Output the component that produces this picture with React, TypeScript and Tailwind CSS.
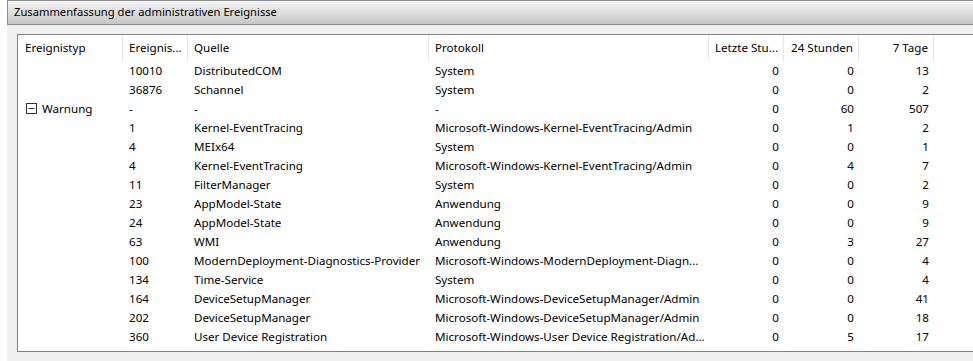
import React from "react";

interface Row {
  typ?: string;
  id: string;
  quelle: string;
  protokoll: string;
  h1: string;
  h24: string;
  d7: string;
}

const rows: Row[] = [
  { id: "10010", quelle: "DistributedCOM", protokoll: "System", h1: "0", h24: "0", d7: "13" },
  { id: "36876", quelle: "Schannel", protokoll: "System", h1: "0", h24: "0", d7: "2" },
  { typ: "Warnung", id: "-", quelle: "-", protokoll: "-", h1: "0", h24: "60", d7: "507" },
  { id: "1", quelle: "Kernel-EventTracing", protokoll: "Microsoft-Windows-Kernel-EventTracing/Admin", h1: "0", h24: "1", d7: "2" },
  { id: "4", quelle: "MEIx64", protokoll: "System", h1: "0", h24: "0", d7: "1" },
  { id: "4", quelle: "Kernel-EventTracing", protokoll: "Microsoft-Windows-Kernel-EventTracing/Admin", h1: "0", h24: "4", d7: "7" },
  { id: "11", quelle: "FilterManager", protokoll: "System", h1: "0", h24: "0", d7: "2" },
  { id: "23", quelle: "AppModel-State", protokoll: "Anwendung", h1: "0", h24: "0", d7: "9" },
  { id: "24", quelle: "AppModel-State", protokoll: "Anwendung", h1: "0", h24: "0", d7: "9" },
  { id: "63", quelle: "WMI", protokoll: "Anwendung", h1: "0", h24: "3", d7: "27" },
  { id: "100", quelle: "ModernDeployment-Diagnostics-Provider", protokoll: "Microsoft-Windows-ModernDeployment-Diagn...", h1: "0", h24: "0", d7: "4" },
  { id: "134", quelle: "Time-Service", protokoll: "System", h1: "0", h24: "0", d7: "4" },
  { id: "164", quelle: "DeviceSetupManager", protokoll: "Microsoft-Windows-DeviceSetupManager/Admin", h1: "0", h24: "0", d7: "41" },
  { id: "202", quelle: "DeviceSetupManager", protokoll: "Microsoft-Windows-DeviceSetupManager/Admin", h1: "0", h24: "0", d7: "18" },
  { id: "360", quelle: "User Device Registration", protokoll: "Microsoft-Windows-User Device Registration/Ad...", h1: "0", h24: "5", d7: "17" },
];

const cols = "grid grid-cols-[105px_65px_241px_280px_75px_75px_75px_1fr]";

const App = () => {
  return (
    <div className="w-[973px] h-[361px] overflow-hidden bg-white flex font-['Noto_Sans',sans-serif] text-[11.6px] text-black">
      <div className="ml-[7px] flex-1 flex flex-col bg-[#f0f0f0]">
        {/* title bar */}
        <div className="h-[25px] shrink-0 flex items-center pl-[6px] border-t border-l border-b border-[#8c8c8c] bg-gradient-to-b from-[#f4f4f4] to-[#c6c6c6]">
          <span className="text-[11.2px]">Zusammenfassung der administrativen Ereignisse</span>
        </div>
        {/* table */}
        <div className="pl-[10px] pt-[9px] pb-[9px] flex-1 flex">
          <div className="flex-1 bg-white border-t border-l border-b border-[#828282] overflow-hidden">
            <div className={`${cols} h-[26px] items-stretch whitespace-nowrap`}>
              <div className="flex items-center pl-[7px] border-r border-[#e5e5e5]">Ereignistyp</div>
              <div className="flex items-center pl-[6px] border-r border-[#e5e5e5]">Ereignis...</div>
              <div className="flex items-center pl-[6px] border-r border-[#e5e5e5]">Quelle</div>
              <div className="flex items-center pl-[6px] border-r border-[#e5e5e5]">Protokoll</div>
              <div className="flex items-center justify-end pr-[5px] border-r border-[#e5e5e5]">Letzte Stu...</div>
              <div className="flex items-center justify-end pr-[5px] border-r border-[#e5e5e5]">24 Stunden</div>
              <div className="flex items-center justify-end pr-[5px] border-r border-[#e5e5e5]">7 Tage</div>
              <div />
            </div>
            {rows.map((row, index) => (
              <div key={index} className={`${cols} h-[19px] items-center whitespace-nowrap`}>
                <div className="pl-[8px] flex items-center gap-[5px]">
                  {row.typ && (
                    <>
                      <svg width="11" height="11" viewBox="0 0 11 11">
                        <rect x="0.5" y="0.5" width="10" height="10" fill="white" stroke="#333" />
                        <line x1="2.5" y1="5.5" x2="8.5" y2="5.5" stroke="#333" />
                      </svg>
                      <span>{row.typ}</span>
                    </>
                  )}
                </div>
                <div className="pl-[6px]">{row.id}</div>
                <div className="pl-[6px] overflow-hidden">{row.quelle}</div>
                <div className="pl-[6px] overflow-hidden">{row.protokoll}</div>
                <div className="text-right pr-[5px]">{row.h1}</div>
                <div className="text-right pr-[5px]">{row.h24}</div>
                <div className="text-right pr-[5px]">{row.d7}</div>
                <div />
              </div>
            ))}
          </div>
        </div>
      </div>
    </div>
  );
};

export default App;
